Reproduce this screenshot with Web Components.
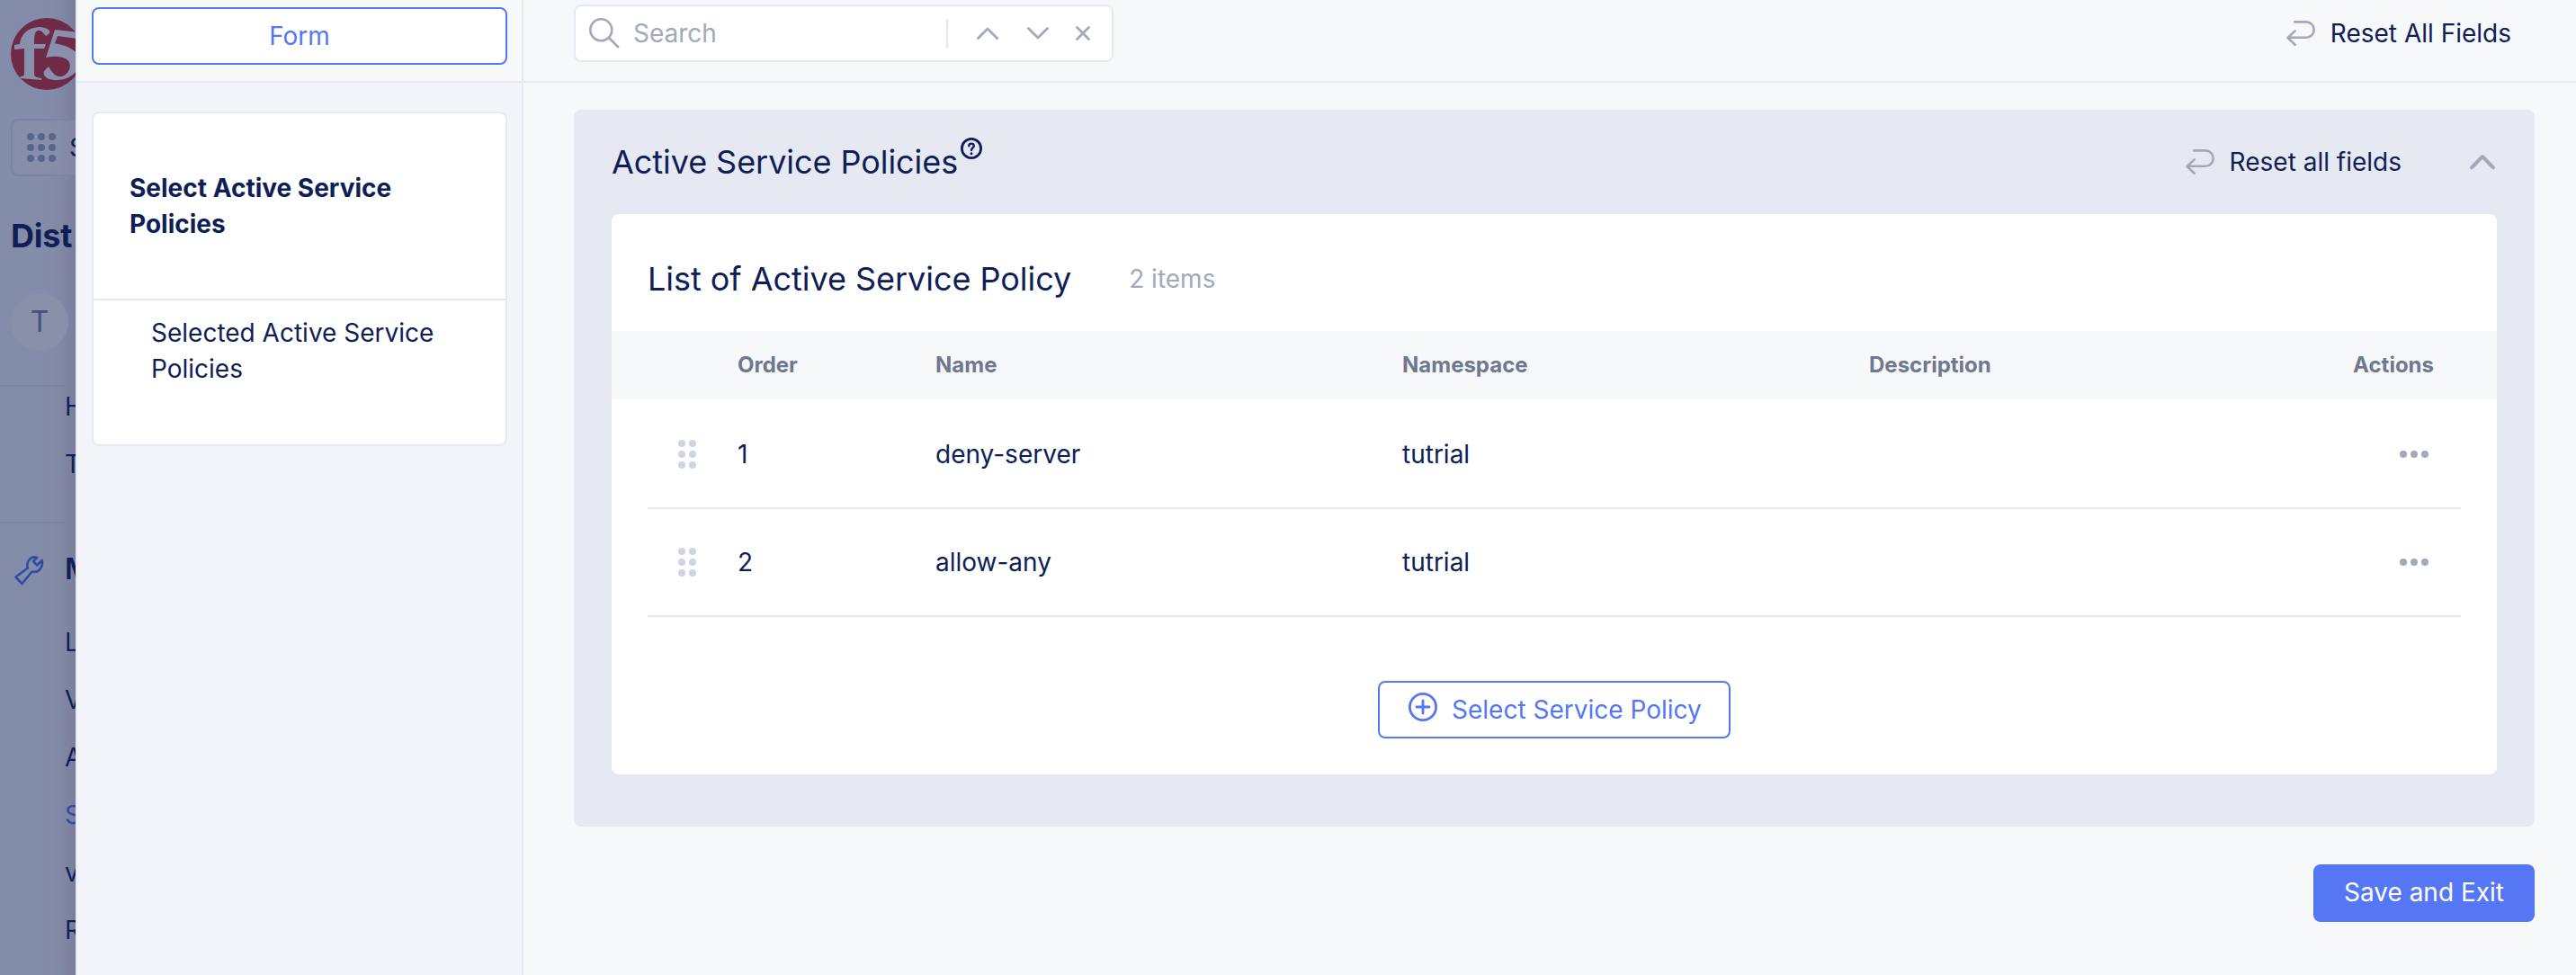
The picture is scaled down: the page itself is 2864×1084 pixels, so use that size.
<!DOCTYPE html>
<html lang="en">
<head>
<meta charset="utf-8">
<title>Active Service Policies</title>
<style>
html,body{margin:0;padding:0}
body{width:2864px;height:1084px;overflow:hidden;font-family:Inter,"Liberation Sans",sans-serif;font-size:28px;line-height:40px;color:#0f1e57;background:#f7f8fa;
--line:#e6e9f2;--blue:#5577f6;--muted:#a2a9ba}
</style>
</head>
<body>
<app-shell></app-shell>
<script>
const define=(name,css,html)=>customElements.define(name,class extends HTMLElement{
  constructor(){super();this.attachShadow({mode:'open'}).innerHTML=`<style>*{box-sizing:border-box}:host{display:block;box-sizing:border-box}svg{display:block;flex:none}${css}</style>${typeof html==='function'?html(this):html}`}
});

const icons={
  logo:['0 0 80 80',80,80,`<circle cx="40" cy="40" r="40" fill="#6f2a48"/>
   <path fill="#8890ab" d="M4 35 L4 30 L10 29 C11 18 19 11 31 10 C40 10 45 14 43 17 L39 20 C36 17 34 13 30 14 C26 15 26 22 26 29 L39 29 L37 34 L26 34 L26 62 C26 66 29 66 34 67 L34 69 L10 67 L11 65 C14 65 15 64 15 61 L15 34 L5 35Z"/>
   <path fill="#8890ab" d="M49 13 L76 16 L82 24 L52 20 L48 31 L46 28 C68 30 82 42 76 54 C72 65 56 72 43 68 C37 66 35 61 38 58 L42 54 C45 59 49 66 56 65 C66 63 69 50 62 46 C56 42 47 42 39 44Z"/>`],
  grid:['0 0 32 32',32,32,[4,16,28].map(y=>[4,16,28].map(x=>`<circle cx="${x}" cy="${y}" r="4" fill="#59648c"/>`).join('')).join('')],
  wrench:['0 0 34 34',34,34,`<path d="M2.5 24.5 15.8 14.5C13.5 6.5 20 0.5 26 3L22 7.2 26.2 11.5 31.6 6C33.5 13.5 28 20.5 20.5 18.5L9.5 32Z" fill="none" stroke="#304ba7" stroke-width="2.6" stroke-linejoin="round"/>`],
  search:['0 0 34 34',34,34,`<circle cx="13.3" cy="13.3" r="12" fill="none" stroke="#a2a9ba" stroke-width="2.6"/><path d="M22 22 32 32" stroke="#a2a9ba" stroke-width="2.8" stroke-linecap="round"/>`],
  up:['0 0 24 14',24,14,`<path d="M1.4 12.4 12 2 22.6 12.4" fill="none" stroke="#a2a9ba" stroke-width="2.8" stroke-linecap="round" stroke-linejoin="round"/>`],
  down:['0 0 24 14',24,14,`<path d="M1.4 1.6 12 12 22.6 1.6" fill="none" stroke="#a2a9ba" stroke-width="2.8" stroke-linecap="round" stroke-linejoin="round"/>`],
  close:['0 0 16 16',16,16,`<path d="M1.5 1.5 14.5 14.5M14.5 1.5 1.5 14.5" stroke="#a2a9ba" stroke-width="2.8" stroke-linecap="round"/>`],
  reset:['0 0 32 28',32,28,`<path d="M9.2 1.4H22a8.7 8.7 0 0 1 0 17.4H2M9.6 11.4 1.6 19 9.6 26.8" fill="none" stroke="#a2a9ba" stroke-width="2.6" stroke-linecap="round" stroke-linejoin="round"/>`],
  collapse:['0 0 28 18',28,18,`<path d="M2 15.4 14 3 26 15.4" fill="none" stroke="#a2a9ba" stroke-width="4" stroke-linecap="round" stroke-linejoin="round"/>`],
  help:['0 0 24 24',24,24,`<circle cx="12" cy="12" r="10.6" fill="none" stroke="#0f1e57" stroke-width="2.8"/><path d="M9.2 9.3C9.2 5.7 14.8 5.7 14.8 9.2C14.8 11.2 12 11.6 12 14" fill="none" stroke="#0f1e57" stroke-width="2.4" stroke-linecap="round"/><circle cx="12" cy="17.7" r="1.5" fill="#0f1e57"/>`],
  drag:['0 0 20 32',20,32,[4,16,28].map(y=>[4,16].map(x=>`<circle cx="${x}" cy="${y}" r="4" fill="#cfd4e3"/>`).join('')).join('')],
  more:['0 0 32 8',32,8,[4,16,28].map(x=>`<circle cx="${x}" cy="4" r="4" fill="#a2a9ba"/>`).join('')],
  plus:['0 0 32 32',32,32,`<path d="M16 9v14M9 16h14" stroke="#5577f6" stroke-width="2.8" stroke-linecap="round"/><circle cx="16" cy="16" r="14.6" fill="none" stroke="#5577f6" stroke-width="2.8"/>`]
};
define('ui-icon',':host{flex:none}',el=>{const [v,w,h,b]=icons[el.getAttribute('name')];return `<svg viewBox="${v}" width="${w}" height="${h}" aria-hidden="true">${b}</svg>`});

define('nav-item',':host{height:64px;line-height:64px;padding-left:72px;white-space:nowrap;color:#101f57}','<slot></slot>');

define('app-nav',`
:host{width:84px;height:1084px;overflow:hidden;flex:none;background:linear-gradient(90deg,rgba(110,105,138,0) 52px,rgba(110,105,138,.14) 70px,rgba(110,105,138,.42) 84px),#838ca8;white-space:nowrap;display:flex;flex-direction:column;padding-top:20px}
.logo{margin-left:12px;height:112px;overflow:hidden;width:80px}
.switch{margin-left:12px;width:200px;height:64px;border:2px solid #7a83a5;border-radius:8px;background:#8890ab8c;display:flex;align-items:center;padding-left:16px;gap:15px;flex:none}
h2{margin:44px 0 0 12px;font-size:36px;line-height:44px;font-weight:700;height:86px;flex:none;letter-spacing:-.2px}
.avatar{margin-left:12px;width:64px;height:64px;border-radius:50%;background:#8990aa;color:#45527c;font-size:32px;line-height:64px;text-align:center;flex:none}
.group{border-top:2px solid #7983a5;margin-top:38px;height:152px;overflow:hidden;flex:none}
.group nav-item:first-child{margin-top:-10px}
.head{border-top:2px solid #7983a5;display:flex;height:102px;padding:35px 0 0 15px;gap:23px;font-size:32px;line-height:36px;font-weight:600;flex:none}
.head span{margin-top:-2px}
.on{color:#304ba7}
`,`<div class="logo"><ui-icon name="logo"></ui-icon></div>
<div class="switch"><ui-icon name="grid"></ui-icon><span>S</span></div>
<h2>Dist</h2><div class="avatar">T</div>
<div class="group"><nav-item>H</nav-item><nav-item>T</nav-item></div>
<div class="head"><ui-icon name="wrench"></ui-icon><span>M</span></div>
<nav-item>L</nav-item><nav-item>V</nav-item><nav-item>A</nav-item><nav-item class="on">S</nav-item><nav-item>v</nav-item><nav-item>R</nav-item>`);

define('form-outline',`
:host{width:498px;flex:none;height:1084px;border-left:2px solid var(--line);border-right:2px solid var(--line);background:#f3f4f9}
.top{height:92px;padding:8px 16px 0;border-bottom:2px solid var(--line);background:#f7f8fa}
.tab{height:64px;border:2px solid var(--blue);border-radius:8px;background:#fff;color:var(--blue);text-align:center;line-height:60px}
.card{margin:32px 16px 0;height:372px;border:2px solid var(--line);border-radius:8px;background:#fff}
.title{height:208px;padding:63px 40px 0;font-weight:700;border-bottom:2px solid var(--line)}
.item{padding:16px 64px 0}
`,`<div class="top"><div class="tab">Form</div></div>
<div class="card"><div class="title"><slot name="title"></slot></div><div class="item"><slot name="item"></slot></div></div>`);

define('reset-link',':host{display:flex;align-items:center;gap:17px;white-space:nowrap}','<ui-icon name="reset"></ui-icon><span><slot></slot></span>');

define('search-box',`
:host{width:600px;height:64px;border:2px solid var(--line);border-radius:8px;background:#fff;display:flex;align-items:center;color:var(--muted);padding:0 24px 0 15px}
.q{margin-left:15px;flex:1}
.sep{width:2px;height:32px;background:#e2e8f2;margin-right:32px}
.d{margin:0 30px 0 32px}
`,`<ui-icon name="search"></ui-icon><span class="q">Search</span><i class="sep"></i><ui-icon name="up"></ui-icon><ui-icon class="d" name="down"></ui-icon><ui-icon name="close"></ui-icon>`);

define('policy-row',`
:host{display:grid;grid-template-columns:100px 220px 519px 519px 1fr auto;height:120px;margin:0 40px;border-bottom:2px solid var(--line);align-items:center;padding:0 36px 0 0}
ui-icon[name=drag]{margin-left:34px}
`,el=>`<ui-icon name="drag"></ui-icon><span>${el.getAttribute('order')}</span><span>${el.getAttribute('name')}</span><span>${el.getAttribute('namespace')}</span><span></span><ui-icon name="more"></ui-icon>`);

define('policy-list',`
:host{height:623px;background:#fff;border-radius:8px}
header{padding:50px 40px 36px;display:flex;align-items:center;height:130px;gap:64px}
h3{margin:0;font-weight:400;font-size:36px;line-height:44px;letter-spacing:-.04px}
.n{color:var(--muted)}
.cols{height:76px;margin-bottom:2px;background:#f7f8fa;display:grid;grid-template-columns:100px 220px 519px 519px 1fr auto;align-items:center;padding:0 70px 0 40px;font-size:24px;font-weight:700;color:#6f788e}
.foot{display:flex;justify-content:center;padding-top:71px}
.add{width:392px;height:64px;border:2px solid var(--blue);border-radius:8px;color:var(--blue);display:flex;padding:11px 0 0 32px;gap:16px}
.t{margin-top:-1px}
`,`<header><h3>List of Active Service Policy</h3><span class="n">2 items</span></header>
<div class="cols"><span></span><span>Order</span><span>Name</span><span>Namespace</span><span>Description</span><span>Actions</span></div>
<slot></slot>
<div class="foot"><div class="add"><ui-icon name="plus"></ui-icon><span class="t">Select Service Policy</span></div></div>`);

define('form-section',`
:host{background:#e6e9f2;border-radius:8px;height:797px;padding:0 42px}
header{height:116px;display:flex;align-items:center}
h2{margin:0;font-weight:400;font-size:36px;line-height:44px;flex:1;display:flex;gap:3px;letter-spacing:-.06px}
h2 ui-icon{margin-top:-5px}
.c{margin:0 2px 0 76px}
`,`<header><h2>Active Service Policies<ui-icon name="help"></ui-icon></h2><reset-link>Reset all fields</reset-link><ui-icon class="c" name="collapse"></ui-icon></header><slot></slot>`);

define('form-main',`
:host{flex:1;height:1084px}
.bar{height:92px;border-bottom:2px solid var(--line);padding:4px 72px 20px 56px;display:flex;align-items:center;justify-content:space-between}
.body{padding:30px 46px 0 56px}
.save{margin:42px 0 0 auto;width:246px;height:64px;border-radius:8px;background:var(--blue);color:#fff;text-align:center;line-height:63px}
`,`<div class="bar"><search-box></search-box><reset-link>Reset All Fields</reset-link></div>
<div class="body"><slot></slot><div class="save">Save and Exit</div></div>`);

define('app-shell',':host{display:flex;width:2864px;height:1084px}',`<app-nav></app-nav>
<form-outline><span slot="title">Select Active Service Policies</span><span slot="item">Selected Active Service Policies</span></form-outline>
<form-main><form-section><policy-list>
<policy-row order="1" name="deny-server" namespace="tutrial"></policy-row>
<policy-row order="2" name="allow-any" namespace="tutrial"></policy-row>
</policy-list></form-section></form-main>`);
</script>
</body>
</html>
